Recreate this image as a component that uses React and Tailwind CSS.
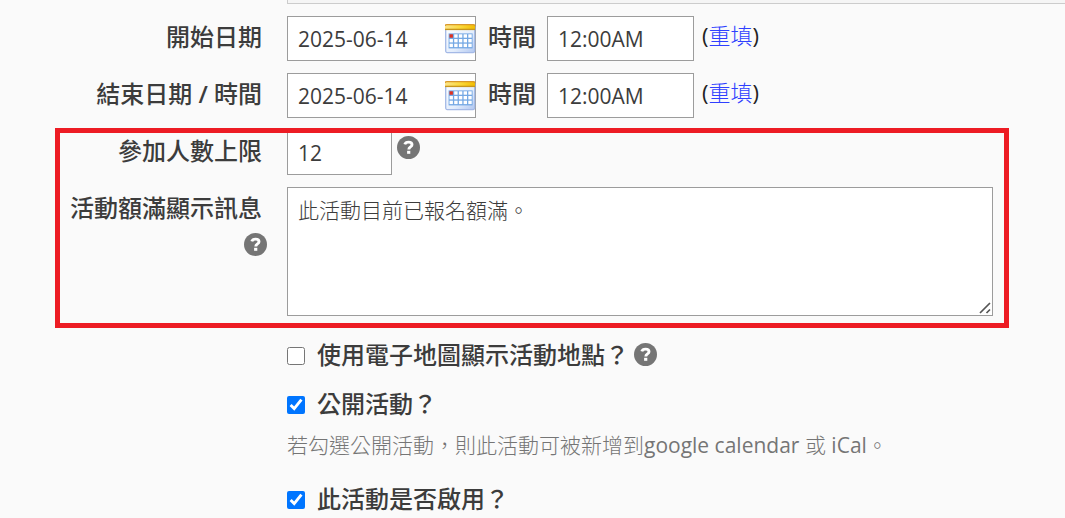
import React, { useState } from 'react';

const labelText = "text-[24px] leading-8 font-medium text-[#3c3c3c]";
const inputBox = "h-[45px] border border-[#9c9c9c] bg-white px-[10px] text-[21px] text-[#3c3c3c] outline-none";

const HelpIcon = ({ label }) => (
    <button type="button" aria-label={label} className="block shrink-0">
        <svg width="23" height="23" viewBox="0 0 23 23" fill="none">
            <circle cx="11.5" cy="11.5" r="11.5" fill="#757575" />
            <path
                d="M7.8 8.4C8.3 6.7 9.7 6.1 11.6 6.1C13.7 6.1 15 7 15 8.7C15 11 11.8 10.8 11.8 13.4"
                stroke="#fff"
                strokeWidth="2.9"
            />
            <rect x="10.1" y="14.8" width="3.2" height="3" fill="#fff" />
        </svg>
    </button>
);

const CalendarIcon = () => (
    <svg width="31" height="31" viewBox="0 0 31 31">
        <defs>
            <linearGradient id="calTop" x1="0" y1="0" x2="1" y2="0">
                <stop offset="0" stopColor="#fbe48a" />
                <stop offset="0.5" stopColor="#fbd93c" />
                <stop offset="1" stopColor="#f2bd00" />
            </linearGradient>
            <linearGradient id="calBody" x1="0" y1="0" x2="1" y2="1">
                <stop offset="0" stopColor="#ffffff" />
                <stop offset="0.6" stopColor="#e3edfc" />
                <stop offset="1" stopColor="#b0c6f0" />
            </linearGradient>
        </defs>
        <rect x="0.7" y="3" width="29" height="26.6" rx="1.5" fill="url(#calBody)" stroke="#a4b9e6" strokeWidth="1.3" />
        <path d="M0 6.5V3Q0 1 2 1H28Q30 1 30 3V6.5Z" fill="url(#calTop)" />
        <path d="M0 3Q0.2 1.6 2 1.6H28Q29.8 1.6 30 3" fill="none" stroke="#d9982a" strokeWidth="1.4" />
        <path d="M0 6.4H30" stroke="#c8961c" strokeWidth="1.4" />
        <rect x="3.6" y="10.4" width="24" height="15" fill="#74a8e4" />
        {[0, 1, 2].map((row) =>
            [0, 1, 2, 3, 4].map((col) => (
                <rect
                    key={`${row}-${col}`}
                    x={4.5 + col * 4.7}
                    y={11.3 + row * 4.7}
                    width="3.4"
                    height="3.4"
                    fill={row === 0 && col === 0 ? '#e0301e' : '#ffffff'}
                />
            ))
        )}
    </svg>
);

const DateRow = ({ id, label, date, time, onChange, onReset }) => (
    <div className="flex">
        <label htmlFor={`${id}-date`} className={`w-[262px] shrink-0 pt-[5px] text-right ${labelText}`}>
            {label}
        </label>
        <div className="ml-[25px] flex">
            <div className="relative">
                <input
                    id={`${id}-date`}
                    type="text"
                    value={date}
                    onChange={(e) => onChange({ date: e.target.value, time })}
                    className={`block w-[189px] ${inputBox}`}
                />
                <button type="button" aria-label="選擇日期" className="absolute top-[7px] right-0">
                    <CalendarIcon />
                </button>
            </div>
            <label htmlFor={`${id}-time`} className={`w-[71px] pt-[5px] pl-3 ${labelText}`}>
                時間
            </label>
            <input
                id={`${id}-time`}
                type="text"
                value={time}
                onChange={(e) => onChange({ date, time: e.target.value })}
                className={`block w-[147px] ${inputBox}`}
            />
            <div className="ml-2 pt-[3px] text-[22px] leading-8 text-[#222]">
                (
                <a
                    href="#reset"
                    onClick={(e) => {
                        e.preventDefault();
                        onReset();
                    }}
                    className="font-light text-[#2f3fff]"
                >
                    重填
                </a>
                )
            </div>
        </div>
    </div>
);

const CheckRow = ({ id, label, checked, onChange, help }) => (
    <div className="flex items-center">
        <input
            id={id}
            type="checkbox"
            checked={checked}
            onChange={(e) => onChange(e.target.checked)}
            className="h-[18px] w-[18px] shrink-0"
        />
        <label htmlFor={id} className={`ml-3 pb-[2px] ${labelText}`}>
            {label}
        </label>
        {help && (
            <div className="ml-[5px] pb-1">
                <HelpIcon label={help} />
            </div>
        )}
    </div>
);

const initial = { date: '2025-06-14', time: '12:00AM' };
const empty = { date: '', time: '' };

const App = () => {
    const [start, setStart] = useState(initial);
    const [end, setEnd] = useState(initial);
    const [limit, setLimit] = useState('12');
    const [message, setMessage] = useState('此活動目前已報名額滿。');
    const [useMap, setUseMap] = useState(false);
    const [isPublic, setIsPublic] = useState(true);
    const [isActive, setIsActive] = useState(true);

    return (
        <form className="min-h-screen bg-[#fafafa] font-['Open_Sans','Noto_Sans_CJK_TC',sans-serif]">
            {/* Bottom edge of the editor above */}
            <div className="ml-[287px] h-1 border-b border-l border-[#ccc] bg-[#f5f5f5]" />

            <div className="flex flex-col gap-3 pt-3">
                <DateRow
                    id="start"
                    label="開始日期"
                    date={start.date}
                    time={start.time}
                    onChange={setStart}
                    onReset={() => setStart(empty)}
                />
                <DateRow
                    id="end"
                    label={<>結束日期 <span className="font-semibold">/</span> 時間</>}
                    date={end.date}
                    time={end.time}
                    onChange={setEnd}
                    onReset={() => setEnd(empty)}
                />

                <div className="relative mr-14 flex flex-col gap-3 pb-3">
                    <div className="flex">
                        <label htmlFor="limit" className={`w-[262px] shrink-0 pt-[5px] text-right ${labelText}`}>
                            參加人數上限
                        </label>
                        <input
                            id="limit"
                            type="text"
                            value={limit}
                            onChange={(e) => setLimit(e.target.value)}
                            className={`ml-[25px] block w-[105px] ${inputBox}`}
                        />
                        <div className="ml-[5px] pt-[6px]">
                            <HelpIcon label="參加人數上限說明" />
                        </div>
                    </div>
                    <div className="flex">
                        <div className="flex w-[267px] shrink-0 flex-col items-end pt-[5px]">
                            <label htmlFor="message" className={`pr-[5px] ${labelText}`}>
                                活動額滿顯示訊息
                            </label>
                            <div className="pt-[9px]">
                                <HelpIcon label="活動額滿顯示訊息說明" />
                            </div>
                        </div>
                        <div className="relative mr-4 ml-5 flex flex-1">
                            <textarea
                                id="message"
                                value={message}
                                onChange={(e) => setMessage(e.target.value)}
                                className="block h-[129px] flex-1 resize-none border border-[#9c9c9c] bg-white px-[10px] py-2 text-[21px] leading-7 font-light text-[#3c3c3c] outline-none"
                            />
                            {/* Resize grip */}
                            <svg
                                width="12"
                                height="12"
                                viewBox="0 0 12 12"
                                className="pointer-events-none absolute right-[2px] bottom-[2px]"
                            >
                                <path d="M1 11L11 1M7.5 11L11 7.5" stroke="#555" strokeWidth="1.7" fill="none" />
                            </svg>
                        </div>
                    </div>
                    {/* Highlight frame */}
                    <div className="pointer-events-none absolute -top-[2px] right-0 bottom-0 left-[55px] border-5 border-[#ed1c24]" />
                </div>
            </div>

            <div className="ml-[287px] pt-[11px]">
                <CheckRow
                    id="map"
                    label="使用電子地圖顯示活動地點？"
                    checked={useMap}
                    onChange={setUseMap}
                    help="電子地圖說明"
                />
                <div className="pt-[15px]">
                    <CheckRow id="public" label="公開活動？" checked={isPublic} onChange={setIsPublic} />
                    <p className="pt-[5px] text-[21px] leading-9 font-light text-[#757575]">
                        若勾選公開活動，則此活動可被新增到<span className="font-normal">google calendar</span> 或{' '}
                        <span className="font-normal">iCal</span>。
                    </p>
                </div>
                <div className="pt-5">
                    <CheckRow id="active" label="此活動是否啟用？" checked={isActive} onChange={setIsActive} />
                </div>
            </div>
        </form>
    );
};

export default App;
